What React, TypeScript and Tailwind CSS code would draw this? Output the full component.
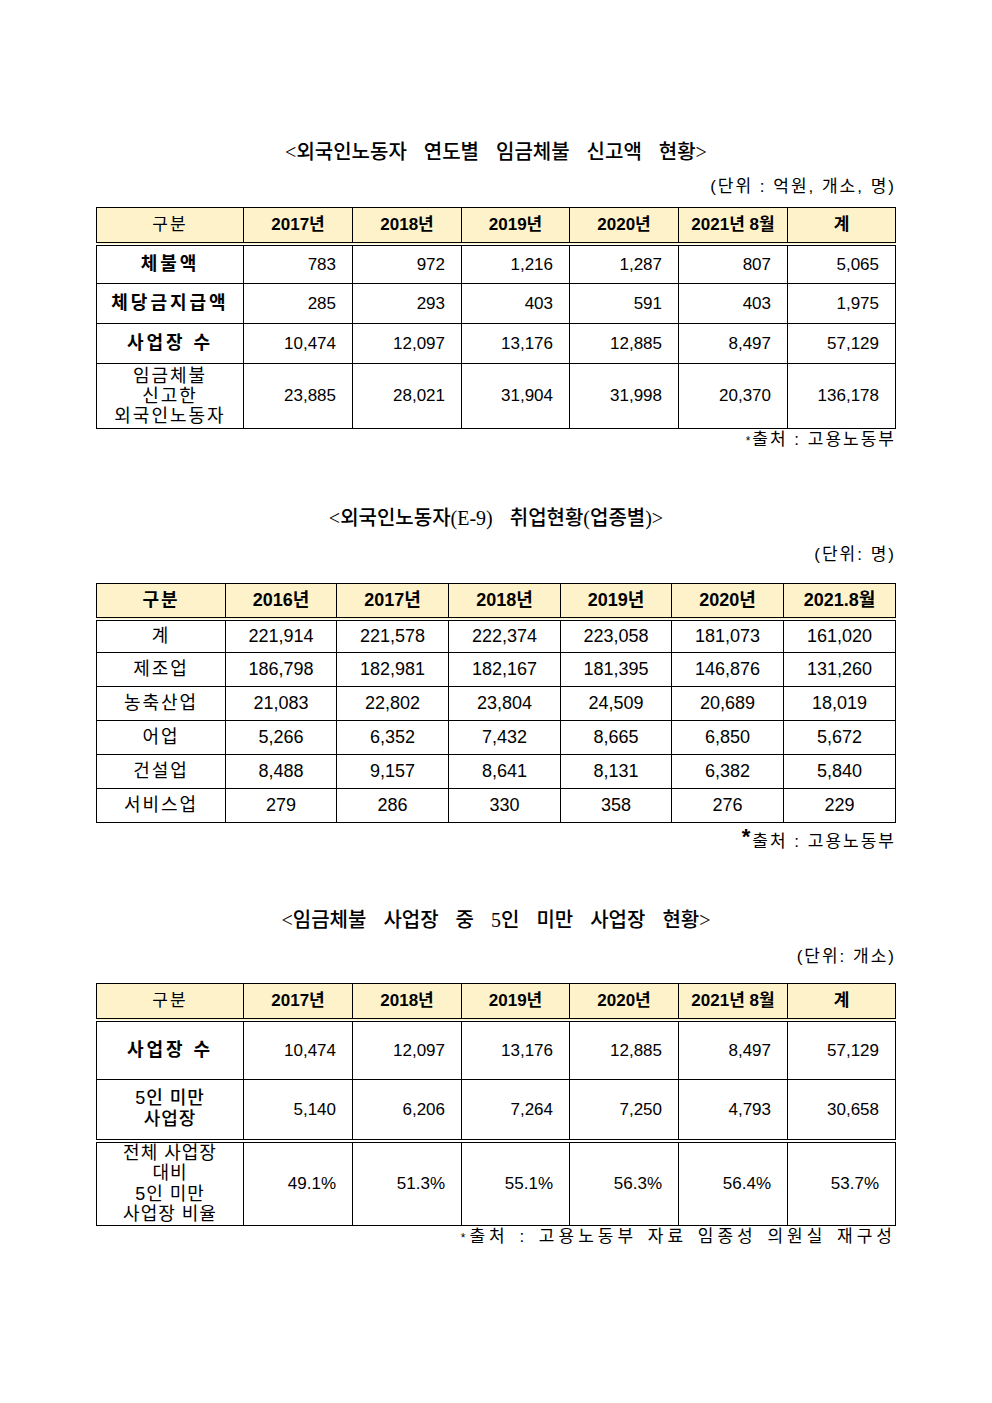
const sans = "font-['Liberation_Sans','Noto_Sans_CJK_KR',sans-serif]"

const years1 = ['2017년', '2018년', '2019년', '2020년', '2021년 8월', '계']

const table1 = [
  { label: '체불액', values: ['783', '972', '1,216', '1,287', '807', '5,065'] },
  { label: '체당금지급액', values: ['285', '293', '403', '591', '403', '1,975'] },
  { label: '사업장 수', values: ['10,474', '12,097', '13,176', '12,885', '8,497', '57,129'] },
]

const years2 = ['2016년', '2017년', '2018년', '2019년', '2020년', '2021.8월']

const table2 = [
  { label: '계', values: ['221,914', '221,578', '222,374', '223,058', '181,073', '161,020'] },
  { label: '제조업', values: ['186,798', '182,981', '182,167', '181,395', '146,876', '131,260'] },
  { label: '농축산업', values: ['21,083', '22,802', '23,804', '24,509', '20,689', '18,019'] },
  { label: '어업', values: ['5,266', '6,352', '7,432', '8,665', '6,850', '5,672'] },
  { label: '건설업', values: ['8,488', '9,157', '8,641', '8,131', '6,382', '5,840'] },
  { label: '서비스업', values: ['279', '286', '330', '358', '276', '229'] },
]

function Title({ children }: { children: React.ReactNode }) {
  return (
    <h2 className="text-center text-[20px] leading-[28px] font-medium text-black [word-spacing:12px] font-['Liberation_Serif','Noto_Sans_CJK_KR',serif]">
      {children}
    </h2>
  )
}

function Unit({ children }: { children: React.ReactNode }) {
  return (
    <p className={`text-right text-[17px] leading-[22px] tracking-[2px] text-black ${sans}`}>
      {children}
    </p>
  )
}

export default function App() {
  return (
    <div className={`min-h-[1403px] bg-white text-black ${sans}`}>
      <div className="mx-auto w-[800px] pt-[138px]">
        {/* 1. 연도별 임금체불 신고액 */}
        <Title>&lt;외국인노동자 연도별 임금체불 신고액 현황&gt;</Title>
        <div className="mt-[10px]">
          <Unit>(단위 : 억원, 개소, 명)</Unit>
        </div>
        <table className="mt-[9px] w-full border-collapse border border-black text-[17px]">
          <colgroup>
            <col className="w-[147px]" />
            <col className="w-[109px]" />
            <col className="w-[109px]" />
            <col className="w-[108px]" />
            <col className="w-[109px]" />
            <col className="w-[109px]" />
            <col />
          </colgroup>
          <thead>
            <tr className="h-[36px]">
              <th className="border border-b-4 border-double border-black bg-[#fef2cb] font-normal tracking-[2px]">구분</th>
              {years1.map((y) => (
                <th key={y} className="border border-b-4 border-double border-black bg-[#fef2cb] font-bold">
                  {y}
                </th>
              ))}
            </tr>
          </thead>
          <tbody>
            {table1.map((r) => (
              <tr key={r.label} className="h-[40px]">
                <td className="border border-black text-center text-[18px] font-bold tracking-[3px]">{r.label}</td>
                {r.values.map((v, i) => (
                  <td key={i} className="border border-black pr-[16px] text-right">
                    {v}
                  </td>
                ))}
              </tr>
            ))}
            <tr className="h-[65px]">
              <td className="border border-black text-center text-[18px] leading-[20px] tracking-[2px]">
                임금체불
                <br />
                신고한
                <br />
                외국인노동자
              </td>
              {['23,885', '28,021', '31,904', '31,998', '20,370', '136,178'].map((v, i) => (
                <td key={i} className="border border-black pr-[16px] text-right">
                  {v}
                </td>
              ))}
            </tr>
          </tbody>
        </table>
        <p className="text-right text-[17px] leading-[22px] tracking-[2px]">
          <span className="text-[12px]">*</span>출처 : 고용노동부
        </p>

        {/* 2. 업종별 취업현황 */}
        <div className="mt-[52px]">
          <Title>&lt;외국인노동자(E-9) 취업현황(업종별)&gt;</Title>
        </div>
        <div className="mt-[12px]">
          <Unit>(단위: 명)</Unit>
        </div>
        <table className="mt-[17px] w-full border-collapse border border-black text-[18px]">
          <colgroup>
            <col className="w-[129px]" />
            <col className="w-[111px]" />
            <col className="w-[112px]" />
            <col className="w-[112px]" />
            <col className="w-[111px]" />
            <col className="w-[112px]" />
            <col />
          </colgroup>
          <thead>
            <tr className="h-[35px]">
              <th className="border border-b-4 border-double border-black bg-[#fef2cb] font-bold tracking-[2px]">구분</th>
              {years2.map((y) => (
                <th key={y} className="border border-b-4 border-double border-black bg-[#fef2cb] font-bold">
                  {y}
                </th>
              ))}
            </tr>
          </thead>
          <tbody>
            {table2.map((r) => (
              <tr key={r.label} className="h-[34px]">
                <td className="border border-black text-center tracking-[2px]">{r.label}</td>
                {r.values.map((v, i) => (
                  <td key={i} className="border border-black text-center">
                    {v}
                  </td>
                ))}
              </tr>
            ))}
          </tbody>
        </table>
        <p className="mt-[6px] text-right text-[17px] leading-[22px] tracking-[2px]">
          <span className="relative -top-[3px] text-[22px] font-bold leading-none">*</span>출처 : 고용노동부
        </p>

        {/* 3. 5인 미만 사업장 */}
        <div className="mt-[53px]">
          <Title>&lt;임금체불 사업장 중 5인 미만 사업장 현황&gt;</Title>
        </div>
        <div className="mt-[12px]">
          <Unit>(단위: 개소)</Unit>
        </div>
        <table className="mt-[15px] w-full border-collapse border border-black text-[17px]">
          <colgroup>
            <col className="w-[147px]" />
            <col className="w-[109px]" />
            <col className="w-[109px]" />
            <col className="w-[108px]" />
            <col className="w-[109px]" />
            <col className="w-[109px]" />
            <col />
          </colgroup>
          <thead>
            <tr className="h-[36px]">
              <th className="border border-b-4 border-double border-black bg-[#fef2cb] font-normal tracking-[2px]">구분</th>
              {years1.map((y) => (
                <th key={y} className="border border-b-4 border-double border-black bg-[#fef2cb] font-bold">
                  {y}
                </th>
              ))}
            </tr>
          </thead>
          <tbody>
            <tr className="h-[60px]">
              <td className="border border-black text-center text-[18px] font-bold tracking-[3px]">사업장 수</td>
              {['10,474', '12,097', '13,176', '12,885', '8,497', '57,129'].map((v, i) => (
                <td key={i} className="border border-black pr-[16px] text-right">
                  {v}
                </td>
              ))}
            </tr>
            <tr className="h-[61px]">
              <td className="border border-b-4 border-double border-black text-center text-[18px] leading-[21px] font-medium tracking-[1px]">
                5인 미만
                <br />
                사업장
              </td>
              {['5,140', '6,206', '7,264', '7,250', '4,793', '30,658'].map((v, i) => (
                <td key={i} className="border border-b-4 border-double border-black pr-[16px] text-right">
                  {v}
                </td>
              ))}
            </tr>
            <tr className="h-[84px]">
              <td className="border border-black text-center text-[18px] leading-[20.5px] tracking-[1px]">
                전체 사업장
                <br />
                대비
                <br />
                5인 미만
                <br />
                사업장 비율
              </td>
              {['49.1%', '51.3%', '55.1%', '56.3%', '56.4%', '53.7%'].map((v, i) => (
                <td key={i} className="border border-black pr-[16px] text-right">
                  {v}
                </td>
              ))}
            </tr>
          </tbody>
        </table>
        <p className="text-right text-[17px] leading-[22px] tracking-[4px] [word-spacing:2px]">
          <span className="text-[12px]">*</span>출처 : 고용노동부 자료 임종성 의원실 재구성
        </p>
      </div>
    </div>
  )
}
